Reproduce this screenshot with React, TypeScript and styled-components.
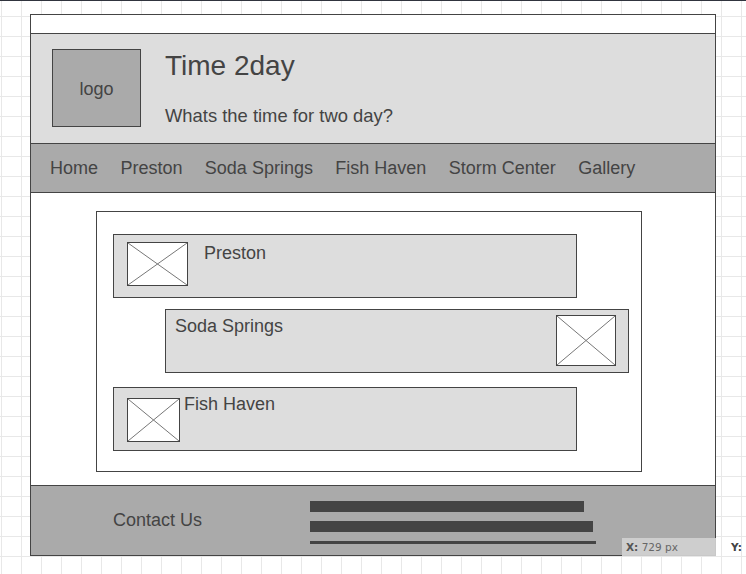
import styled, { createGlobalStyle } from 'styled-components';

const GlobalStyle = createGlobalStyle`
  * {
    box-sizing: border-box;
  }
  html,
  body {
    margin: 0;
    padding: 0;
  }
  body {
    min-height: 100vh;
    background-color: #fff;
    background-image: linear-gradient(#30343e, #30343e),
      linear-gradient(to right, #e8e8e8 1px, transparent 1px),
      linear-gradient(to bottom, #e8e8e8 1px, transparent 1px);
    background-size: 100% 1px, 20px 20px, 20px 20px;
    background-position: 0 0, 1px 0, 0 16px;
    background-repeat: no-repeat, repeat, repeat;
    font-family: 'Liberation Sans', Arial, sans-serif;
    color: #444;
  }
`;

const Page = styled.div`
  position: relative;
  height: 574px;
  padding: 14px 0 0 30px;
`;

const Frame = styled.div`
  width: 686px;
  border: 1px solid #444;
  background: #fff;
`;

const TopStrip = styled.div`
  height: 18px;
`;

const Header = styled.header`
  display: flex;
  gap: 24px;
  height: 110px;
  padding: 15px 0 0 21px;
  border-top: 1px solid #444;
  background: #ddd;
`;

const Logo = styled.div`
  display: flex;
  align-items: center;
  justify-content: center;
  width: 89px;
  height: 78px;
  padding-top: 2px;
  border: 1px solid #444;
  background: #aaa;
  font-size: 18px;
`;

const TitleBlock = styled.div`
  display: flex;
  flex-direction: column;
  padding-top: 1px;
`;

const Title = styled.h1`
  margin: 0;
  font-size: 28px;
  line-height: 32px;
  font-weight: 400;
`;

const Tagline = styled.p`
  margin: 23px 0 0;
  font-size: 18.4px;
  line-height: 21px;
`;

const Nav = styled.nav`
  display: flex;
  align-items: center;
  gap: 22.4px;
  height: 50px;
  padding: 1px 0 0 19px;
  border-top: 1px solid #444;
  border-bottom: 1px solid #444;
  background: #aaa;
  font-size: 18px;
  line-height: 21px;
`;

const NavLink = styled.a`
  color: #444;
  text-decoration: none;
`;

const Main = styled.main`
  height: 292px;
  padding: 18px 0 0 65px;
`;

const Showcase = styled.section`
  display: flex;
  flex-direction: column;
  width: 546px;
  height: 261px;
  padding: 22px 0 0 16px;
  border: 1px solid #444;
`;

const Card = styled.div<{ $indent: number; $top: number }>`
  display: flex;
  align-items: flex-start;
  width: 464px;
  height: 64px;
  margin: ${(p) => p.$top}px 0 0 ${(p) => p.$indent}px;
  border: 1px solid #444;
  background: #ddd;
`;

const CardLabel = styled.span<{ $left: number; $top: number }>`
  margin: ${(p) => p.$top}px 0 0 ${(p) => p.$left}px;
  font-size: 18px;
  line-height: 21px;
`;

const ThumbBox = styled.div<{ $w: number; $h: number; $left: string; $right: number; $top: number }>`
  flex: 0 0 auto;
  width: ${(p) => p.$w}px;
  height: ${(p) => p.$h}px;
  margin: ${(p) => p.$top}px ${(p) => p.$right}px 0 ${(p) => p.$left};
  border: 1px solid #444;
  background: #fff;

  svg {
    display: block;
    width: 100%;
    height: 100%;
  }
`;

const Footer = styled.footer`
  display: flex;
  height: 70px;
  padding-left: 82px;
  border-top: 1px solid #444;
  background: #aaa;
`;

const Contact = styled.span`
  align-self: center;
  font-size: 18px;
  line-height: 21px;
`;

const Bars = styled.div`
  display: flex;
  flex-direction: column;
  gap: 9px;
  margin-left: 108px;
  padding-top: 15px;
`;

const Bar = styled.div<{ $w: number; $h: number }>`
  width: ${(p) => p.$w}px;
  height: ${(p) => p.$h}px;
  background: #444;
`;

const Coords = styled.div`
  position: absolute;
  left: 622px;
  top: 538px;
  width: 94px;
  height: 18px;
  padding-left: 4px;
  background: rgba(208, 208, 208, 0.95);
  font-family: 'DejaVu Sans', Verdana, sans-serif;
  font-size: 10.5px;
  line-height: 18px;
  color: #666;

  b {
    color: #555;
  }
`;

const CoordY = styled.div`
  position: absolute;
  left: 731px;
  top: 538px;
  font-family: 'DejaVu Sans', Verdana, sans-serif;
  font-size: 10.5px;
  font-weight: 700;
  line-height: 18px;
  color: #444;
`;

interface IThumbProps {
  w: number;
  h: number;
  left?: string;
  right?: number;
  top: number;
}

function Thumb({ w, h, left = '13px', right = 0, top }: IThumbProps) {
  return (
    <ThumbBox $w={w} $h={h} $left={left} $right={right} $top={top}>
      <svg viewBox="0 0 100 100" preserveAspectRatio="none">
        <line x1="0" y1="0" x2="100" y2="100" stroke="#777" strokeWidth="1" vectorEffect="non-scaling-stroke" />
        <line x1="100" y1="0" x2="0" y2="100" stroke="#777" strokeWidth="1" vectorEffect="non-scaling-stroke" />
      </svg>
    </ThumbBox>
  );
}

const links = ['Home', 'Preston', 'Soda Springs', 'Fish Haven', 'Storm Center', 'Gallery'];

function App() {
  return (
    <>
      <GlobalStyle />
      <Page>
        <Frame>
          <TopStrip />
          <Header>
            <Logo>logo</Logo>
            <TitleBlock>
              <Title>Time 2day</Title>
              <Tagline>Whats the time for two day?</Tagline>
            </TitleBlock>
          </Header>
          <Nav>
            {links.map((link) => (
              <NavLink key={link} href="#">
                {link}
              </NavLink>
            ))}
          </Nav>
          <Main>
            <Showcase>
              <Card $indent={0} $top={0}>
                <Thumb w={61} h={44} top={7} />
                <CardLabel $left={16} $top={8}>
                  Preston
                </CardLabel>
              </Card>
              <Card $indent={52} $top={11}>
                <CardLabel $left={9} $top={6}>
                  Soda Springs
                </CardLabel>
                <Thumb w={60} h={51} left="auto" right={12} top={5} />
              </Card>
              <Card $indent={0} $top={14}>
                <Thumb w={53} h={44} top={10} />
                <CardLabel $left={4} $top={6}>
                  Fish Haven
                </CardLabel>
              </Card>
            </Showcase>
          </Main>
          <Footer>
            <Contact>Contact Us</Contact>
            <Bars>
              <Bar $w={274} $h={11} />
              <Bar $w={283} $h={11} />
              <Bar $w={286} $h={3} />
            </Bars>
          </Footer>
        </Frame>
        <Coords>
          <b>X:</b> 729 px
        </Coords>
        <CoordY>Y:</CoordY>
      </Page>
    </>
  );
}

export default App;
